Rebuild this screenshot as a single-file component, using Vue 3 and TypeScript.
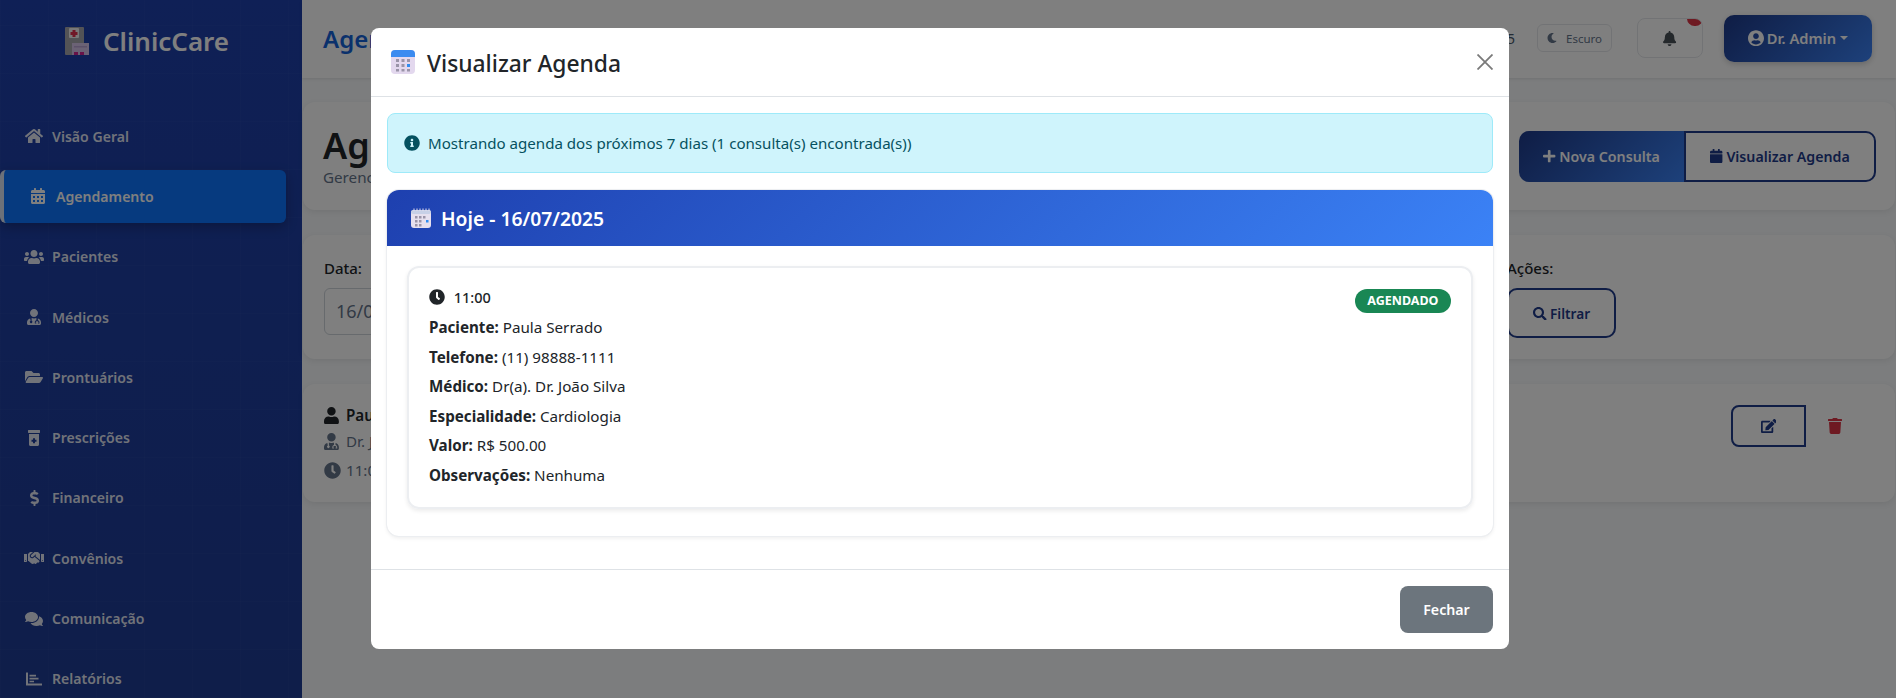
<script setup lang="ts">
import { h } from 'vue'

const icons: Record<string, [string, string]> = {
  home: ['0 0 576 512', 'M280.37 148.26L96 300.11V464a16 16 0 0 0 16 16l112.06-.29a16 16 0 0 0 15.92-16V368a16 16 0 0 1 16-16h64a16 16 0 0 1 16 16v95.64a16 16 0 0 0 16 16.05L464 480a16 16 0 0 0 16-16V300L295.67 148.26a12.19 12.19 0 0 0-15.3 0zM571.6 251.47L488 182.56V44.05a12 12 0 0 0-12-12h-56a12 12 0 0 0-12 12v72.61L318.47 43a48 48 0 0 0-61 0L4.34 251.47a12 12 0 0 0-1.6 16.9l25.5 31A12 12 0 0 0 45.15 301l235.22-193.74a12.19 12.19 0 0 1 15.3 0L530.9 301a12 12 0 0 0 16.9-1.6l25.5-31a12 12 0 0 0-1.7-16.93z'],
  calendar: ['0 0 448 512', 'M0 464c0 26.5 21.5 48 48 48h352c26.5 0 48-21.5 48-48V192H0v272zm320-196c0-6.6 5.4-12 12-12h40c6.6 0 12 5.4 12 12v40c0 6.6-5.4 12-12 12h-40c-6.6 0-12-5.4-12-12v-40zm0 128c0-6.6 5.4-12 12-12h40c6.6 0 12 5.4 12 12v40c0 6.6-5.4 12-12 12h-40c-6.6 0-12-5.4-12-12v-40zM192 268c0-6.6 5.4-12 12-12h40c6.6 0 12 5.4 12 12v40c0 6.6-5.4 12-12 12h-40c-6.6 0-12-5.4-12-12v-40zm0 128c0-6.6 5.4-12 12-12h40c6.6 0 12 5.4 12 12v40c0 6.6-5.4 12-12 12h-40c-6.6 0-12-5.4-12-12v-40zM64 268c0-6.6 5.4-12 12-12h40c6.6 0 12 5.4 12 12v40c0 6.6-5.4 12-12 12H76c-6.6 0-12-5.4-12-12v-40zm0 128c0-6.6 5.4-12 12-12h40c6.6 0 12 5.4 12 12v40c0 6.6-5.4 12-12 12H76c-6.6 0-12-5.4-12-12v-40zM400 64h-48V16c0-8.8-7.2-16-16-16h-32c-8.8 0-16 7.2-16 16v48H160V16c0-8.8-7.2-16-16-16h-32c-8.8 0-16 7.2-16 16v48H48C21.5 64 0 85.5 0 112v48h448v-48c0-26.5-21.5-48-48-48z'],
  calendarPlain: ['0 0 448 512', 'M12 192h424c6.600 0 12 5.400 12 12v260c0 26.500-21.500 48-48 48H48c-26.500 0-48-21.500-48-48V204c0-6.600 5.400-12 12-12zm436-44v-36c0-26.500-21.500-48-48-48h-48V12c0-6.600-5.400-12-12-12h-40c-6.600 0-12 5.400-12 12v52H160V12c0-6.600-5.400-12-12-12h-40c-6.600 0-12 5.400-12 12v52H48C21.500 64 0 85.500 0 112v36c0 6.600 5.400 12 12 12h424c6.600 0 12-5.400 12-12z'],
  users: ['0 0 640 512', 'M96 224c35.3 0 64-28.7 64-64s-28.7-64-64-64-64 28.7-64 64 28.7 64 64 64zm448 0c35.3 0 64-28.7 64-64s-28.7-64-64-64-64 28.7-64 64 28.7 64 64 64zm32 32h-64c-17.6 0-33.5 7.1-45.1 18.6 40.3 22.1 68.9 62 75.1 109.4h66c17.7 0 32-14.3 32-32v-32c0-35.3-28.7-64-64-64zm-256 0c61.9 0 112-50.1 112-112S381.9 32 320 32 208 82.1 208 144s50.1 112 112 112zm76.8 32h-8.3c-20.8 10-43.9 16-68.5 16s-47.6-6-68.5-16h-8.3C179.6 288 128 339.6 128 403.2V432c0 26.5 21.5 48 48 48h288c26.5 0 48-21.5 48-48v-28.8c0-63.6-51.6-115.2-115.2-115.2zm-223.7-13.400C161.5 263.1 145.6 256 128 256H64c-35.3 0-64 28.7-64 64v32c0 17.7 14.3 32 32 32h65.9c6.3-47.4 34.9-87.3 75.2-109.4z'],
  doctor: ['0 0 448 512', 'M224 256c70.700 0 128-57.300 128-128S294.700 0 224 0 96 57.300 96 128s57.300 128 128 128zM100 300C40 315 0 365 0 425v39c0 26.500 21.500 48 48 48h352c26.500 0 48-21.500 48-48v-39c0-60-40-110-100-125v60c30 8 50 34 50 66v40h-48v-30h20v-10c0-48-92-48-92 0v10h20v30h-48v-40c0-32 20-58 50-66v-72c-16 6-48 14-76 14s-60-8-76-14v88a40 40 0 1 1-32 0z'],
  folder: ['0 0 576 512', 'M572.694 292.093L500.27 416.248A63.997 63.997 0 0 1 444.989 448H45.025c-18.523 0-30.064-20.093-20.731-36.093l72.424-124.155A64 64 0 0 1 152 256h399.964c18.523 0 30.064 20.093 20.73 36.093zM152 224h328v-48c0-26.51-21.49-48-48-48H272l-64-64H48C21.49 64 0 85.49 0 112v278.046l69.077-118.418C86.214 242.25 117.989 224 152 224z'],
  bottle: ['0 0 384 512', 'M0 16C0 7 7 0 16 0h352c9 0 16 7 16 16v64c0 9-7 16-16 16H16C7 96 0 89 0 80zM32 128h320v336c0 26.500-21.500 48-48 48H80c-26.500 0-48-21.500-48-48V128zm128 136v48h-48v64h48v48h64v-48h48v-64h-48v-48z'],
  dollar: ['0 0 288 512', 'M209.2 233.4l-108-31.6C88.7 198.2 80 186.5 80 173.5c0-16.3 13.2-29.5 29.5-29.5h66.3c12.2 0 24.2 3.7 34.2 10.5 6.1 4.1 14.3 3.1 19.5-2l34.8-34c7.1-6.9 6.1-18.4-1.8-24.500C238 74.8 207.4 64.1 176 64V16c0-8.800-7.200-16-16-16h-32c-8.800 0-16 7.200-16 16v48h-2.500C45.800 64-5.400 118.700.5 183.600c4.200 46.100 39.400 83.600 83.800 96.600l102.500 30c12.500 3.700 21.200 15.300 21.200 28.300 0 16.300-13.200 29.500-29.500 29.500h-66.300C100 368 88 364.300 78 357.500c-6.100-4.100-14.300-3.100-19.500 2l-34.800 34c-7.100 6.900-6.100 18.400 1.800 24.500 24.500 19.200 55.100 29.900 86.500 30v48c0 8.800 7.200 16 16 16h32c8.800 0 16-7.200 16-16v-48.200c46.600-.9 90.300-28.600 105.700-72.700 21.500-61.600-14.600-124.800-72.500-141.700z'],
  handshake: ['0 0 640 512', 'M434.7 64h-85.900c-8 0-15.700 3-21.600 8.400l-98.300 90c-.1.1-.2.3-.3.4-16.600 15.600-16.300 40.500-2.100 56 12.700 13.900 39.400 17.600 56.100 2.700.1-.1.3-.1.4-.2l79.900-73.200c6.500-5.900 16.700-5.500 22.600 1 6 6.500 5.500 16.600-1 22.600l-26.100 23.900L504 313.800c2.900 2.400 5.500 5 7.900 7.700V128l-54.600-54.600c-5.900-6-14.100-9.400-22.600-9.400zM544 128.200v223.900c0 17.700 14.300 32 32 32h64V128.200h-96zm48 223.900c-8.800 0-16-7.200-16-16s7.200-16 16-16 16 7.200 16 16-7.200 16-16 16zM0 384h64c17.700 0 32-14.300 32-32V128.200H0V384zm48-63.900c8.800 0 16 7.200 16 16s-7.200 16-16 16-16-7.200-16-16c0-8.900 7.200-16 16-16zm435.900 18.600L334.600 217.500l-30 27.500c-29.700 27.100-75.200 24.500-101.700-4.400-26.900-29.400-24.800-74.900 4.400-101.700L289.100 64h-83.800c-8.500 0-16.600 3.400-22.600 9.400L128 128v223.900h18.300l90.500 81.900c27.400 22.300 67.700 18.100 90-9.300l.2-.2 17.900 15.500c15.900 13 39.400 10.500 52.300-5.400l31.400-38.600 5.400 4.400c13.700 11.100 33.900 9.100 45-4.700l9.500-11.700c11.200-13.800 9.100-33.900-4.600-45.100z'],
  comments: ['0 0 576 512', 'M416 192c0-88.400-93.100-160-208-160S0 103.600 0 192c0 34.300 14.100 65.900 38 92-13.400 30.200-35.500 54.200-35.800 54.500-2.200 2.300-2.800 5.700-1.500 8.700S4.800 352 8 352c36.600 0 66.900-12.300 88.700-25 32.200 15.700 70.300 25 111.300 25 114.900 0 208-71.600 208-160zm122 220c23.900-26 38-57.700 38-92 0-66.900-53.500-124.200-129.300-148.100.9 6.600 1.300 13.300 1.300 20.100 0 105.900-107.700 192-240 192-10.800 0-21.300-.8-31.700-1.900C207.800 439.600 281.800 480 368 480c41 0 79.100-9.200 111.300-25 21.800 12.700 52.100 25 88.700 25 3.200 0 6.100-1.900 7.300-4.800 1.300-2.900.7-6.300-1.500-8.700-.3-.3-22.400-24.200-35.800-54.500z'],
  chart: ['0 0 512 512', 'M12 48h40c6.600 0 12 5.400 12 12v340h436c6.600 0 12 5.400 12 12v40c0 6.600-5.400 12-12 12H12c-6.600 0-12-5.400-12-12V60c0-6.600 5.400-12 12-12zM112 120h208v56H112zM112 214h288v56H112zM112 308h144v52H112z'],
  moon: ['0 0 512 512', 'M283.211 512c78.962 0 151.079-35.925 198.857-94.792 7.068-8.708-.639-21.43-11.562-19.35-124.203 23.654-238.262-71.576-238.262-196.954 0-72.222 38.662-138.635 101.498-174.394 9.686-5.512 7.25-20.197-3.756-22.23A258.156 258.156 0 0 0 283.211 0c-141.309 0-256 114.511-256 256 0 141.309 114.511 256 256 256z'],
  bell: ['0 0 448 512', 'M224 512c35.32 0 63.97-28.65 63.97-64H160.03c0 35.35 28.65 64 63.97 64zm215.39-149.71c-19.32-20.76-55.47-51.99-55.47-154.29 0-77.7-54.48-139.9-127.94-155.16V32c0-17.67-14.32-32-31.98-32s-31.98 14.33-31.98 32v20.84C118.56 68.1 64.08 130.3 64.08 208c0 102.3-36.15 133.53-55.47 154.29-6 6.45-8.66 14.16-8.61 21.71.11 16.4 12.98 32 32.1 32h383.8c19.12 0 32-15.6 32.1-32 .05-7.55-2.61-15.27-8.61-21.71z'],
  userCircle: ['0 0 496 512', 'M248 8C111 8 0 119 0 256s111 248 248 248 248-111 248-248S385 8 248 8zm0 96c48.6 0 88 39.4 88 88s-39.4 88-88 88-88-39.4-88-88 39.4-88 88-88zm0 344c-58.7 0-111.3-26.6-146.5-68.2 18.8-35.4 55.6-59.8 98.5-59.8 2.4 0 4.8.4 7.1 1.1 13 4.2 26.6 6.9 40.9 6.9 14.3 0 28-2.7 40.9-6.9 2.3-.7 4.7-1.1 7.1-1.1 42.9 0 79.7 24.4 98.5 59.8C359.3 421.4 306.7 448 248 448z'],
  plus: ['0 0 448 512', 'M416 208H272V64c0-17.67-14.33-32-32-32h-32c-17.67 0-32 14.33-32 32v144H32c-17.67 0-32 14.33-32 32v32c0 17.67 14.33 32 32 32h144v144c0 17.67 14.33 32 32 32h32c17.67 0 32-14.33 32-32V304h144c17.67 0 32-14.33 32-32v-32c0-17.67-14.33-32-32-32z'],
  search: ['0 0 512 512', 'M505 442.7L405.3 343c-4.5-4.5-10.6-7-17-7H372c27.6-35.3 44-79.7 44-128C416 93.1 322.9 0 208 0S0 93.1 0 208s93.1 208 208 208c48.3 0 92.7-16.4 128-44v16.3c0 6.4 2.5 12.5 7 17l99.7 99.7c9.4 9.4 24.6 9.4 33.9 0l28.3-28.3c9.4-9.4 9.4-24.6.1-34zM208 336c-70.7 0-128-57.2-128-128 0-70.7 57.2-128 128-128 70.7 0 128 57.2 128 128 0 70.7-57.2 128-128 128z'],
  user: ['0 0 448 512', 'M224 256c70.7 0 128-57.3 128-128S294.7 0 224 0 96 57.3 96 128s57.3 128 128 128zm89.6 32h-16.7c-22.2 10.2-46.9 16-72.9 16s-50.6-5.8-72.9-16h-16.7C60.2 288 0 348.2 0 422.4V464c0 26.5 21.5 48 48 48h352c26.5 0 48-21.5 48-48v-41.6c0-74.2-60.2-134.4-134.4-134.4z'],
  clock: ['0 0 512 512', 'M256,8C119,8,8,119,8,256S119,504,256,504,504,393,504,256,393,8,256,8Zm92.49,313h0l-20,25a16,16,0,0,1-22.49,2.5h0l-67-49.72a40,40,0,0,1-15-31.23V112a16,16,0,0,1,16-16h32a16,16,0,0,1,16,16V256l58,42.5A16,16,0,0,1,348.49,321Z'],
  edit: ['0 0 576 512', 'M402.6 83.2l90.2 90.2c3.8 3.8 3.8 10 0 13.8L274.4 405.6l-92.8 10.3c-12.4 1.4-22.9-9.1-21.5-21.5l10.3-92.8L388.8 83.2c3.8-3.8 10-3.8 13.8 0zm162-22.9l-48.8-48.8c-15.2-15.2-39.9-15.2-55.2 0l-35.4 35.4c-3.8 3.8-3.8 10 0 13.8l90.2 90.2c3.8 3.8 10 3.8 13.8 0l35.4-35.4c15.2-15.3 15.2-40 0-55.2zM384 346.2V448H64V128h229.8c3.2 0 6.2-1.3 8.5-3.5l40-40c7.6-7.6 2.2-20.5-8.5-20.5H48C21.5 64 0 85.5 0 112v352c0 26.5 21.5 48 48 48h352c26.5 0 48-21.5 48-48V306.2c0-10.7-12.9-16-20.5-8.5l-40 40c-2.2 2.3-3.5 5.3-3.5 8.5z'],
  trash: ['0 0 448 512', 'M432 32H312l-9.4-18.7A24 24 0 0 0 281.1 0H166.8a23.72 23.72 0 0 0-21.4 13.3L136 32H16A16 16 0 0 0 0 48v32a16 16 0 0 0 16 16h416a16 16 0 0 0 16-16V48a16 16 0 0 0-16-16zM53.2 467a48 48 0 0 0 47.9 45h245.8a48 48 0 0 0 47.9-45L416 128H32z'],
  info: ['0 0 512 512', 'M256 8C119.043 8 8 119.083 8 256c0 136.997 111.043 248 248 248s248-111.003 248-248C504 119.083 392.957 8 256 8zm0 110c23.196 0 42 18.804 42 42s-18.804 42-42 42-42-18.804-42-42 18.804-42 42-42zm56 254c0 6.627-5.373 12-12 12h-88c-6.627 0-12-5.373-12-12v-24c0-6.627 5.373-12 12-12h12v-64h-12c-6.627 0-12-5.373-12-12v-24c0-6.627 5.373-12 12-12h64c6.627 0 12 5.373 12 12v100h12c6.627 0 12 5.373 12 12v24z'],
}

const Ico = (props: { n: string }) =>
  h('svg', { viewBox: icons[props.n][0], class: 'ico', 'aria-hidden': 'true' }, [
    h('path', { d: icons[props.n][1], fill: 'currentColor', 'fill-rule': 'evenodd' }),
  ])

const nav = [
  { label: 'Visão Geral', icon: 'home' },
  { label: 'Agendamento', icon: 'calendar', active: true },
  { label: 'Pacientes', icon: 'users' },
  { label: 'Médicos', icon: 'doctor' },
  { label: 'Prontuários', icon: 'folder' },
  { label: 'Prescrições', icon: 'bottle' },
  { label: 'Financeiro', icon: 'dollar' },
  { label: 'Convênios', icon: 'handshake' },
  { label: 'Comunicação', icon: 'comments' },
  { label: 'Relatórios', icon: 'chart' },
]

const detalhes = [
  { k: 'Paciente:', v: 'Paula Serrado' },
  { k: 'Telefone:', v: '(11) 98888-1111' },
  { k: 'Médico:', v: 'Dr(a). Dr. João Silva' },
  { k: 'Especialidade:', v: 'Cardiologia' },
  { k: 'Valor:', v: 'R$ 500.00' },
  { k: 'Observações:', v: 'Nenhuma' },
]
</script>

<template>
  <div class="app">
    <aside class="sidebar">
      <div class="brand">
        <svg class="brand-icon" viewBox="0 0 24 28">
          <path d="M1 0h17a1 1 0 0 1 1 1v15h-12v12H1a1 1 0 0 1-1-1V1a1 1 0 0 1 1-1z" fill="#a6a6ac" />
          <rect x="4" y="1" width="10" height="10" rx="1" fill="#f4f2f2" />
          <path d="M7.500 3h3v2h2v3h-2v2h-3V8h-2V5h2z" fill="#e0314f" />
          <rect x="7" y="16" width="17" height="12" fill="#d7c4ea" />
          <rect x="9" y="19" width="13" height="1.500" fill="#b9a2d4" />
          <rect x="9" y="25" width="4" height="3" fill="#d02490" />
          <rect x="15" y="25" width="4" height="3" fill="#d02490" />
        </svg>
        <span>ClinicCare</span>
      </div>
      <nav class="menu">
        <a v-for="item in nav" :key="item.label" class="menu-item" :class="{ active: item.active }">
          <span class="menu-ico"><Ico :n="item.icon" /></span>
          {{ item.label }}
        </a>
      </nav>
    </aside>

    <div class="content">
      <header class="topbar">
        <h2 class="page-name">Agendamento</h2>
        <div class="top-actions">
          <span class="top-date">16/07/2025</span>
          <button class="theme"><Ico n="moon" /> Escuro</button>
          <button class="bell"><Ico n="bell" /><i class="bell-dot"></i></button>
          <button class="admin"><Ico n="userCircle" /> Dr. Admin <i class="caret"></i></button>
        </div>
      </header>

      <main class="page">
        <section class="card head-card">
          <div>
            <h1>Agendamento</h1>
            <p>Gerencie as consultas da clínica</p>
          </div>
          <div class="head-btns">
            <button class="btn-solid"><Ico n="plus" /> Nova Consulta</button>
            <button class="btn-line"><Ico n="calendarPlain" /> Visualizar Agenda</button>
          </div>
        </section>

        <section class="card filter-card">
          <div class="field">
            <label>Data:</label>
            <div class="fake-input">16/07/2025</div>
          </div>
          <div class="field field-actions">
            <label>Ações:</label>
            <button class="btn-filter"><Ico n="search" /> Filtrar</button>
          </div>
        </section>

        <section class="card appt-card">
          <div class="appt-lines">
            <div class="a-row a-name"><span class="a-ico"><Ico n="user" /></span>Paula Serrado</div>
            <div class="a-row a-doc"><span class="a-ico"><Ico n="doctor" /></span>Dr. João Silva</div>
            <div class="a-row a-time"><span class="a-ico"><Ico n="clock" /></span>11:00</div>
          </div>
          <div class="appt-btns">
            <button class="btn-edit"><Ico n="edit" /></button>
            <button class="btn-trash"><Ico n="trash" /></button>
          </div>
        </section>
      </main>
    </div>

    <div class="backdrop">
      <div class="modal">
        <div class="modal-head">
          <svg class="m-cal" viewBox="0 0 24 24">
            <rect x="0" y="0" width="24" height="24" rx="4" fill="#e3d8ee" />
            <path d="M0 7V4a4 4 0 0 1 4-4h16a4 4 0 0 1 4 4v3z" fill="#3b8bf0" />
            <g fill="#9a94a8">
              <rect x="5" y="9" width="3" height="3" /><rect x="10.500" y="9" width="3" height="3" /><rect x="16" y="9" width="3" height="3" />
              <rect x="5" y="14" width="3" height="3" /><rect x="10.500" y="14" width="3" height="3" />
              <rect x="5" y="19" width="3" height="2.500" /><rect x="10.500" y="19" width="3" height="2.500" /><rect x="16" y="19" width="3" height="2.500" />
            </g>
            <rect x="16" y="14" width="3" height="3" fill="#2f8cf0" />
          </svg>
          <h3>Visualizar Agenda</h3>
          <svg class="m-close" viewBox="0 0 16 16">
            <path d="M.5.500l15 15M15.500.500l-15 15" stroke="#7a7a7a" stroke-width="1.800" fill="none" />
          </svg>
        </div>

        <div class="modal-body">
          <div class="alert"><Ico n="info" /> Mostrando agenda dos próximos 7 dias (1 consulta(s) encontrada(s))</div>

          <div class="day">
            <div class="day-head">
              <svg class="d-cal" viewBox="0 0 20 20">
                <rect x="0" y="2" width="20" height="18" rx="3" fill="#e6e0ee" />
                <rect x="0" y="2" width="20" height="4" rx="2" fill="#c7d0e6" />
                <g stroke="#e6e0ee" stroke-width="1" fill="none">
                  <path d="M3 3V0.500M6 3V0.500M9 3V0.500M12 3V0.500M15 3V0.500M18 3V0.500" />
                </g>
                <g fill="#9a94a8">
                  <rect x="4" y="8" width="2.500" height="2.500" /><rect x="8" y="8" width="2.500" height="2.500" /><rect x="12" y="8" width="2.500" height="2.500" />
                  <rect x="4" y="12" width="2.500" height="2.500" /><rect x="8" y="12" width="2.500" height="2.500" />
                  <rect x="4" y="16" width="2.500" height="2.500" /><rect x="8" y="16" width="2.500" height="2.500" />
                </g>
                <rect x="15" y="12" width="2.500" height="2.500" fill="#2f8cf0" />
              </svg>
              Hoje - 16/07/2025
            </div>
            <div class="day-body">
              <div class="slot">
                <div class="slot-info">
                  <div class="slot-time"><Ico n="clock" /> 11:00</div>
                  <div v-for="d in detalhes" :key="d.k" class="slot-row"><b>{{ d.k }}</b> {{ d.v }}</div>
                </div>
                <span class="badge">AGENDADO</span>
              </div>
            </div>
          </div>
        </div>

        <div class="modal-foot">
          <button class="btn-close">Fechar</button>
        </div>
      </div>
    </div>
  </div>
</template>

<style scoped>
* { box-sizing: border-box; }
.app {
  display: flex;
  height: 698px;
  overflow: hidden;
  position: relative;
  font-family: "Noto Sans", "Liberation Sans", sans-serif;
  color: #212529;
  background: #f8fafc;
}
.ico { display: inline-block; height: 1em; width: auto; vertical-align: -0.125em; }
button { font-family: inherit; cursor: pointer; }

.sidebar {
  width: 302px;
  flex: none;
  background-color: #1e40af;
  background-image:
    repeating-linear-gradient(0deg, rgba(255,255,255,.018) 0 1px, transparent 1px 48px),
    repeating-linear-gradient(90deg, rgba(255,255,255,.018) 0 1px, transparent 1px 48px),
    linear-gradient(180deg, #1e40ac, #1e3c94);
  color: #fff;
}
.brand {
  display: flex;
  align-items: center;
  gap: 14px;
  height: 82px;
  padding-left: 65px;
  font-size: 26px;
  font-weight: 600;
}
.brand-icon { width: 24px; height: 28px; }
.menu { display: flex; flex-direction: column; gap: 8px; padding-top: 28px; }
.menu-item {
  display: flex;
  align-items: center;
  height: 52.300px;
  padding-left: 24px;
  margin-right: 16px;
  font-size: 14.100px;
  font-weight: 600;
  color: rgba(255,255,255,.88);
  border-radius: 6px;
}
.menu-ico { width: 20px; margin-right: 8px; flex: none; font-size: 16px; display: flex; justify-content: center; }
.menu-item.active {
  background: #0c75ff;
  color: #fff;
  border-left: 4px solid #d9e2f3;
  box-shadow: 0 4px 12px rgba(0,0,0,.25);
}

.content { flex: 1; min-width: 0; }
.topbar {
  height: 78px;
  display: flex;
  align-items: center;
  justify-content: space-between;
  padding: 0 24px 2px 21px;
  background: #fff;
  box-shadow: 0 1px 3px rgba(0,0,0,.1);
}
.page-name { margin: 0; font-size: 24px; font-weight: 600; color: #1562d8; }
.top-actions { display: flex; align-items: center; }
.top-date { font-size: 14px; color: #475569; margin-right: 22px; }
.theme {
  display: flex; align-items: center; gap: 9px;
  width: 75px; height: 28px; padding: 0 9px;
  background: #fff; border: 1px solid #e5e7eb; border-radius: 6px;
  font-size: 11.500px; color: #64748b; margin-right: 25px;
}
.theme .ico { font-size: 14px; }
.bell {
  position: relative; width: 66px; height: 40px;
  background: #fff; border: 1px solid #e5e7eb; border-radius: 8px;
  font-size: 15px; color: #495057; overflow: hidden; margin-right: 21px;
}
.bell-dot {
  position: absolute; top: -8px; right: -1px;
  width: 16px; height: 15px; background: #dc3545; border-radius: 8px;
}
.admin {
  display: flex; align-items: center; justify-content: center; gap: 3px;
  width: 148px; height: 47px;
  background: linear-gradient(135deg, #1e3a8a, #3b82f6);
  border: 0; border-radius: 10px;
  font-size: 14.700px; font-weight: 600; color: #fff;
  box-shadow: 0 2px 6px rgba(0,0,0,.2);
}
.admin .ico { font-size: 16.500px; }
.caret {
  width: 0; height: 0; border: 4px solid transparent; border-top-color: #fff;
  border-bottom: 0; margin-left: 1px;
}

.page { padding: 24px 1px 0; display: flex; flex-direction: column; gap: 25px; }
.card { background: #fff; border-radius: 12px; box-shadow: 0 2px 6px rgba(0,0,0,.08); }
.head-card {
  display: flex; align-items: center; justify-content: space-between;
  height: 108px; padding: 0 19px 0 20px;
}
.head-card h1 { margin: 0; font-size: 36px; line-height: 42px; font-weight: 600; }
.head-card p { margin: 0; font-size: 15.200px; color: #64748b; }
.head-btns { display: flex; }
.head-btns button { height: 51px; font-size: 14.200px; font-weight: 600; }
.btn-solid {
  width: 165px; border: 0; border-radius: 10px 0 0 10px; color: #fff;
  background: linear-gradient(135deg, #1e3a8a, #3b82f6);
}
.btn-line {
  width: 192px; background: #fff; color: #1e3a8a;
  border: 2px solid #1e3a8a; border-radius: 0 10px 10px 0;
}
.filter-card {
  display: flex; justify-content: space-between;
  height: 124px; padding: 23px 19px 0 21px;
}
.field label { display: block; font-size: 15px; font-weight: 500; line-height: 20px; margin-bottom: 10px; }
.fake-input {
  width: 200px; height: 47px; line-height: 45px; padding-left: 11px;
  border: 1px solid #ced4da; border-radius: 6px; font-size: 18px; color: #64748b;
}
.field-actions { width: 369px; }
.btn-filter {
  display: block;
  width: 109px; height: 50px; background: #fff; color: #1e3a8a;
  border: 2px solid #1e3a8a; border-radius: 10px; font-size: 13.600px; font-weight: 600;
}
.appt-card {
  display: flex; justify-content: space-between;
  height: 118px; padding: 20px 31px 0 21px;
}
.a-row { display: flex; align-items: center; height: 22px; }
.a-ico { width: 22px; flex: none; font-size: 17px; display: flex; }
.a-name { font-size: 15.200px; font-weight: 600; margin-bottom: 4px; }
.a-doc { font-size: 15.200px; color: #64748b; margin-bottom: 7px; }
.a-time { font-size: 15.200px; color: #64748b; }
.appt-btns { display: flex; align-items: flex-start; margin-top: 1px; }
.btn-edit {
  width: 75px; height: 42px; background: #fff; color: #1e3a8a;
  border: 2px solid #1e3a8a; border-radius: 8px 0 0 8px; font-size: 14px;
}
.btn-trash { width: 58px; height: 42px; background: none; border: 0; color: #dc3545; font-size: 16px; }

.backdrop {
  position: absolute; inset: 0;
  background: rgba(0,0,0,.5);
  display: flex; justify-content: center; align-items: flex-start;
  padding: 28px 16px 0 0;
}
.modal {
  width: 1138px; height: 621px;
  background: #fff; border-radius: 8px;
  display: flex; flex-direction: column;
}
.modal-head {
  display: flex; align-items: center;
  height: 69px; padding: 0 16px 0 20px;
  border-bottom: 1px solid #dee2e6;
}
.m-cal { width: 24px; height: 24px; margin-right: 12px; }
.modal-head h3 { margin: 0; padding-top: 2px; flex: 1; font-size: 22.800px; font-weight: 500; }
.m-close { width: 16px; height: 16px; }
.modal-body { flex: 1; padding: 16px 16px 0; }
.alert {
  height: 60px; display: flex; align-items: center; gap: 8px;
  padding: 0 16px;
  background: #cff4fc; border: 1px solid #9eeaf9; border-radius: 8px;
  color: #055160; font-size: 15.100px;
}
.alert .ico { font-size: 16px; }
.day {
  margin-top: 17px; height: 346px;
  border-radius: 12px; overflow: hidden;
  box-shadow: 0 0 0 1px #eceef1, 0 2px 4px rgba(0,0,0,.08);
}
.day-head {
  height: 56px; display: flex; align-items: center; gap: 10px;
  padding: 0 24px;
  background: linear-gradient(135deg, #1e40af, #3b82f6);
  color: #fff; font-size: 19.300px; font-weight: 600;
}
.d-cal { width: 20px; height: 20px; }
.day-body { padding: 20px 20px 0; }
.slot {
  display: flex; justify-content: space-between; align-items: flex-start;
  height: 243px; padding: 18px 20px 0;
  border: 2px solid #eceef1; border-radius: 12px;
  box-shadow: 0 2px 4px rgba(0,0,0,.08);
}
.slot-time { font-size: 14.500px; font-weight: 500; height: 30px; line-height: 22px; }
.slot-time .ico { margin-right: 5px; font-size: 16px; }
.slot-row { font-size: 15.200px; line-height: 22px; height: 29.600px; }
.slot-row b { font-weight: 700; }
.badge {
  margin-top: 3px;
  height: 24px; line-height: 24px; padding: 0 12.500px;
  background: #198754; color: #fff; border-radius: 12px;
  font-size: 12.500px; font-weight: 700;
}
.modal-foot {
  height: 80px; display: flex; justify-content: flex-end; align-items: center;
  padding: 0 16px; border-top: 1px solid #dee2e6;
}
.btn-close {
  width: 93px; height: 47px; background: #6c757d; color: #fff;
  border: 0; border-radius: 8px; font-size: 14.200px; font-weight: 600;
}
</style>
